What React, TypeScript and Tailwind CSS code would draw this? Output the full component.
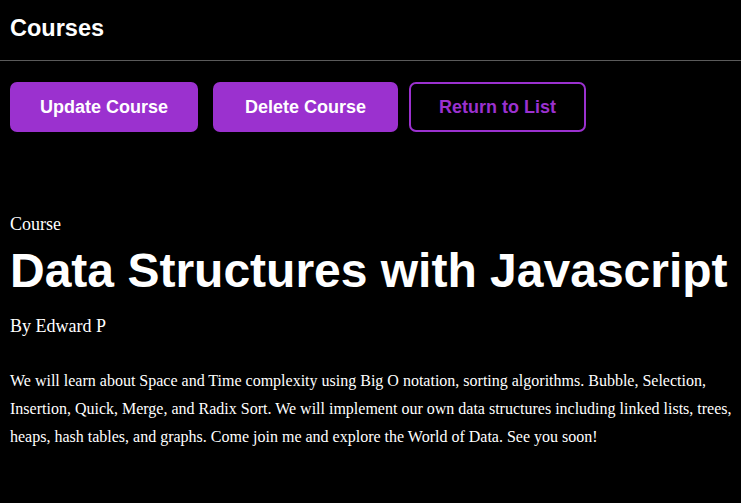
export default function App() {
  const btn =
    "h-[50px] rounded-[7px] text-[18px] font-bold font-['Liberation_Sans',Arial,sans-serif] flex items-center justify-center";

  return (
    <div className="min-h-[503px] w-full bg-black text-white">
      {/* top bar */}
      <header className="h-[61px] border-b border-[#5a5a5a] px-[10px] flex items-center">
        <h1 className="text-[23.5px] font-bold font-['Liberation_Sans',Arial,sans-serif] leading-none -mt-[3px]">
          Courses
        </h1>
      </header>

      {/* actions */}
      <div className="flex px-[10px] pt-[21px]">
        <button className={`${btn} w-[188px] bg-[#9b31cf] text-white`}>Update Course</button>
        <button className={`${btn} w-[185px] ml-[15px] bg-[#9b31cf] text-white`}>Delete Course</button>
        <button className={`${btn} w-[177px] ml-[11px] border-2 border-[#9b31cf] text-[#9b31cf]`}>
          Return to List
        </button>
      </div>

      {/* course details */}
      <section className="pl-[10px] pt-[81px] font-['Liberation_Serif','Times_New_Roman',serif]">
        <p className="text-[18px] leading-[22px]">Course</p>
        <h2 className="mt-[8px] text-[48px] leading-[56px] font-bold font-['Liberation_Sans',Arial,sans-serif] whitespace-nowrap">
          Data Structures with Javascript
        </h2>
        <p className="mt-[16px] text-[18px] leading-[22px]">By Edward P</p>
        <p className="mt-[30px] text-[16px] leading-[28px] w-[728px]">
          We will learn about Space and Time complexity using Big O notation, sorting algorithms. Bubble,
          Selection, Insertion, Quick, Merge, and Radix Sort. We will implement our own data structures
          including linked lists, trees, heaps, hash tables, and graphs. Come join me and explore the World of
          Data. See you soon!
        </p>
      </section>
    </div>
  );
}
